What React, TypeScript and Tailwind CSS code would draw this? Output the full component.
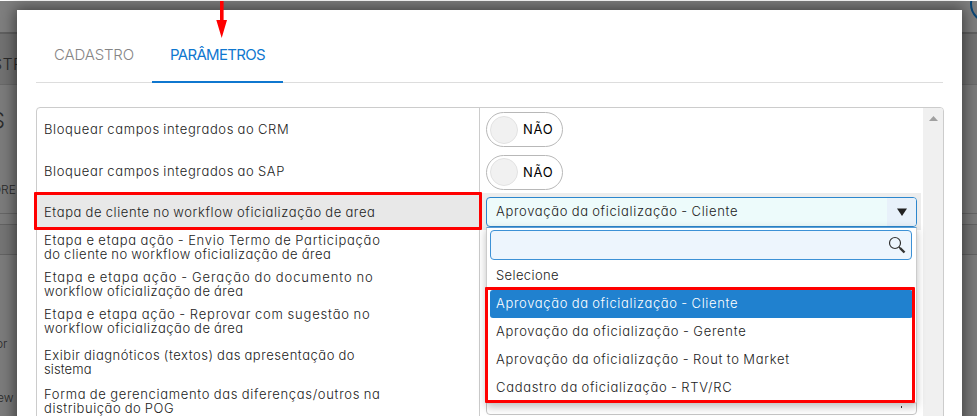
import React from "react";

const rows: { lines: string[]; height: string; tracking: string[] }[] = [
  { lines: ["Bloquear campos integrados ao CRM"], height: "h-[41px]", tracking: ["tracking-[0.63px]"] },
  { lines: ["Bloquear campos integrados ao SAP"], height: "h-[43px]", tracking: ["tracking-[0.63px]"] },
  { lines: ["Etapa de cliente no workflow oficialização de area"], height: "h-[37px] pt-[3px]", tracking: ["tracking-[0.6px]"] },
  {
    lines: ["Etapa e etapa ação - Envio Termo de Participação", "do cliente no workflow oficialização de área"],
    height: "h-[36px]",
    tracking: ["tracking-[0.74px]", "tracking-[0.54px]"],
  },
  {
    lines: ["Etapa e etapa ação - Geração do documento no", "workflow oficialização de área"],
    height: "h-[37px]",
    tracking: ["tracking-[0.92px]", "tracking-[0.52px]"],
  },
  {
    lines: ["Etapa e etapa ação - Reprovar com sugestão no", "workflow oficialização de área"],
    height: "h-[37px]",
    tracking: ["tracking-[0.82px]", "tracking-[0.52px]"],
  },
  {
    lines: ["Exibir diagnóticos (textos) das apresentação do", "sistema"],
    height: "h-[44px] pt-[2px]",
    tracking: ["tracking-[0.54px]", "tracking-[0.1px]"],
  },
  {
    lines: ["Forma de gerenciamento das diferenças/outros na", "distribuição do POG"],
    height: "h-[36px]",
    tracking: ["tracking-[0.68px]", "tracking-[0.55px]"],
  },
];

const options = [
  { label: "Selecione", tracking: "tracking-[0.38px]" },
  { label: "Aprovação da oficialização - Cliente", tracking: "tracking-[0.66px]" },
  { label: "Aprovação da oficialização - Gerente", tracking: "tracking-[0.72px]" },
  { label: "Aprovação da oficialização - Rout to Market", tracking: "tracking-[0.71px]" },
  { label: "Cadastro da oficialização - RTV/RC", tracking: "tracking-[0.69px]" },
];

function Toggle() {
  return (
    <div className="flex h-[35px] w-[77px] items-center rounded-full border border-[#b8b8b8] bg-white pl-[3px]">
      <span className="h-[28px] w-[28px] rounded-full border border-[#e2e2e2] bg-[#f1f1f1]" />
      <span className="ml-[5px] text-[13px] leading-none font-normal tracking-[0.7px] text-black">NÃO</span>
    </div>
  );
}

function Backdrop() {
  return (
    <div className="absolute inset-0 flex flex-col overflow-hidden border-t border-white bg-[#7c7c7c] text-[#2a2a2a]">
      <div className="h-[33px] shrink-0 border-b-2 border-[#606060] bg-[#7f7f7f]" />
      <div className="flex h-[51px] shrink-0 items-center border-b border-[#696969] bg-[#727272] pt-[10px]">
        <span className="-ml-[8px] text-[16px] font-light tracking-[0.3px]">STR</span>
      </div>
      <div className="flex h-[129px] shrink-0 flex-col border-b border-[#666]">
        <span className="mt-[20px] -ml-[9px] text-[22px] leading-[30px] font-light">S</span>
        <span className="mt-[48px] -ml-[8px] text-[12px] leading-[14px] font-light">ORE</span>
      </div>
      <div className="h-[11px] shrink-0 border-b border-[#636363]" />
      <div className="h-[30px] shrink-0 border-b border-[#636363] bg-[#757575]" />
      <div className="flex flex-col text-[12px] leading-[14px]">
        <span className="mt-[82px] -ml-[4px]">or</span>
        <span className="mt-[40px] -ml-[3px]">ew</span>
      </div>
      <span className="absolute -top-[16px] left-[970px] h-[38px] w-[38px] rounded-full border-2 border-[#0c4776]" />
    </div>
  );
}

export default function App() {
  return (
    <div className="relative h-[416px] w-[977px] overflow-hidden bg-[#7c7c7c] font-['Inter','Open_Sans',sans-serif] text-[13px] font-light text-[#222] [font-feature-settings:'cv11','ss03'] [word-spacing:-0.7px]">
      <Backdrop />

      <div className="relative mt-[10px] ml-[17px] h-[420px] w-[945px] bg-white pt-[25px] pl-[19px] shadow-[0_0_14px_2px_rgba(0,0,0,0.5)]">
        <div className="flex h-[48px] w-[907px] border-b border-[#ddd] text-[15px]">
          <div className="flex h-[48px] w-[116px] items-center justify-center pb-[7px] text-[#858585]">
            <span className="tracking-[-0.15px]">CADASTRO</span>
          </div>
          <div className="flex h-[48px] w-[131px] items-center justify-center border-b-2 border-[#0f77cf] pb-[5px] text-[#0f77cf]">
            <span className="font-normal tracking-[-0.7px]">PARÂMETROS</span>
          </div>
        </div>

        <div className="mt-[24px] flex h-[330px] w-[908px] overflow-hidden rounded-t-[4px] border border-[#ccc]">
          <div className="flex w-[443px] flex-col border-r border-[#ccc]">
            {rows.map((row, i) => (
              <div
                key={row.lines[0]}
                className={`flex shrink-0 flex-col justify-center pl-[7px] leading-[14px] whitespace-nowrap ${row.height} ${
                  i === 2 ? "bg-[#e8e8e8]" : ""
                }`}
              >
                {row.lines.map((line, j) => (
                  <span key={line} className="flex">
                    <span className={row.tracking[j]}>{line}</span>
                  </span>
                ))}
              </div>
            ))}
          </div>

          <div className="flex w-[443px] flex-col">
            <div className="flex h-[43px] shrink-0 items-center pl-[6px]">
              <Toggle />
            </div>
            <div className="flex h-[42px] shrink-0 items-center pl-[6px]">
              <Toggle />
            </div>
            <div className="mr-[2px] flex h-[37px] shrink-0 items-center bg-[#ededed] pl-[6px]">
              <div className="flex h-[30px] w-[431px] items-center rounded-[4px] border border-[#2c86cd] bg-[#edfbfb] pl-[9px]">
                <span className="flex-1 tracking-[0.66px]">Aprovação da oficialização - Cliente</span>
                <span className="flex h-full w-[29px] items-center justify-center rounded-r-[3px] bg-[#e8f1fa] text-[#222]">
                  <svg width="10" height="8" viewBox="0 0 10 8">
                    <path d="M0 0.5h10L5 8z" fill="currentColor" />
                  </svg>
                </span>
              </div>
            </div>
            <div className="relative flex h-[185px] flex-col pl-[6px]">
              <div className="mt-[154px] flex h-[31px] w-[431px] justify-end rounded-[4px] border border-[#c5c5c5] pt-[21px] pr-[14px]">
                <span className="h-[2px] w-[1px] bg-[#333]" />
              </div>
              <div className="absolute -top-[3px] left-[6px] flex h-[177px] w-[431px] flex-col rounded-b-[3px] border border-[#ccc] border-t-[#5b9fd6] bg-white px-[3px] pt-[2px] shadow-[0_3px_8px_rgba(0,0,0,0.25)]">
                <div className="mb-[2px] flex h-[30px] w-[422px] shrink-0 items-center justify-end rounded-[4px] border border-[#3c91d6] bg-[#edf5fd] pr-[5px]">
                  <svg width="18" height="18" viewBox="0 0 18 18" fill="none" stroke="#333">
                    <circle cx="7" cy="7" r="5.5" strokeWidth="1.2" />
                    <path d="M11 11l1.5 1.5" strokeWidth="1.2" />
                    <path d="M12 12l4.5 4.5" strokeWidth="2.4" />
                  </svg>
                </div>
                {options.map((option, i) => (
                  <div
                    key={option.label}
                    className={`flex h-[28px] w-[423px] shrink-0 items-center pl-[6px] whitespace-nowrap ${
                      i === 1 ? "rounded-[3px] bg-[#2081cf] text-white" : ""
                    }`}
                  >
                    <span className={option.tracking}>{option.label}</span>
                  </div>
                ))}
              </div>
            </div>
          </div>

          <div className="flex w-[20px] justify-center bg-[#f0f0f0] pt-[8px]">
            <svg width="9" height="5" viewBox="0 0 9 5">
              <path d="M0 5h9L4.5 0z" fill="#a0a0a0" />
            </svg>
          </div>
        </div>
      </div>

      <svg className="absolute top-[1px] left-[215px]" width="14" height="37" viewBox="0 0 14 37" fill="#f00">
        <path d="M5 0h3.6v19H12L6.7 37 1.3 19H5z" />
      </svg>
      <div className="absolute top-[192px] left-[34px] h-[38px] w-[448px] rounded-[1px] border-3 border-[#f00]" />
      <div className="absolute top-[287px] left-[485px] h-[116px] w-[430px] rounded-[1px] border-3 border-[#f00]" />
    </div>
  );
}
